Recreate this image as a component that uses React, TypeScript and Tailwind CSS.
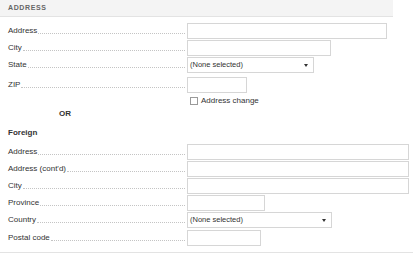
import React from 'react';

type Field = {
  label: string;
  width: number;
  kind?: 'input' | 'select';
  gap?: number;
};

const domestic: Field[] = [
  { label: 'Address', width: 200, gap: 1 },
  { label: 'City', width: 144, gap: 1 },
  { label: 'State', width: 127, kind: 'select', gap: 4 },
  { label: 'ZIP', width: 60, gap: 0 },
];

const foreign: Field[] = [
  { label: 'Address', width: 222, gap: 1 },
  { label: "Address (cont'd)", width: 222, gap: 1 },
  { label: 'City', width: 222, gap: 1 },
  { label: 'Province', width: 78, gap: 1 },
  { label: 'Country', width: 145, kind: 'select', gap: 2 },
  { label: 'Postal code', width: 74, gap: 0 },
];

function Row({ field }: { field: Field }) {
  return (
    <div className="flex items-center h-[16px]" style={{ marginBottom: field.gap }}>
      <div className="w-[177px] ml-2 flex items-end">
        <span className="leading-none">{field.label}</span>
        <span className="flex-1 border-b border-dotted border-[#c4c4c4] mb-[1px] ml-[1px]" />
      </div>
      {field.kind === 'select' ? (
        <div
          className="ml-[2px] h-[16px] border border-[#d6d6d6] bg-white flex items-center justify-between pl-[2px] pr-[5px]"
          style={{ width: field.width }}
        >
          <span className="text-[7.5px] text-[#333]">(None selected)</span>
          <span className="w-0 h-0 border-l-[2.5px] border-r-[2.5px] border-t-[3px] border-l-transparent border-r-transparent border-t-[#333]" />
        </div>
      ) : (
        <div className="ml-[2px] h-[16px] border border-[#d6d6d6] bg-white" style={{ width: field.width }} />
      )}
    </div>
  );
}

export default function App() {
  return (
    <div className="w-[413px] h-[254px] bg-white text-[8px] text-[#333] font-['Liberation_Sans',Arial,sans-serif] relative">
      <div className="w-[393px] h-[17px] bg-[#f4f4f4] border-b border-[#e3e3e3] pl-2 flex items-center">
        <span className="text-[7px] font-bold tracking-[0.09em] text-[#666]">ADDRESS</span>
      </div>

      <div className="pt-[6px]">
        {domestic.map((f) => (
          <Row key={f.label} field={f} />
        ))}

        <div className="mt-[3px] h-[10px] flex items-center pl-[190px]">
          <span className="w-[8px] h-[8px] border border-[#9a9a9a] bg-white" />
          <span className="ml-[3px]">Address change</span>
        </div>

        <div className="mt-[3px] h-[9px] flex items-center pl-[59px] font-bold">OR</div>

        <div className="mt-[10px] h-[9px] flex items-center pl-2 font-bold">Foreign</div>

        <div className="mt-[7px]">
          {foreign.map((f) => (
            <Row key={f.label} field={f} />
          ))}
        </div>
      </div>

      <div className="absolute left-0 right-0 top-[252px] h-px bg-[#e3e3e3]" />
    </div>
  );
}
